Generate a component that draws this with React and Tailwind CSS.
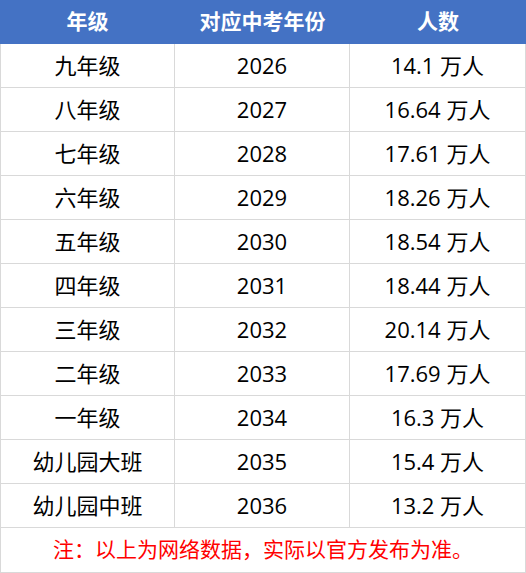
const rows = [
  ['九年级', '2026', '14.1 万人'],
  ['八年级', '2027', '16.64 万人'],
  ['七年级', '2028', '17.61 万人'],
  ['六年级', '2029', '18.26 万人'],
  ['五年级', '2030', '18.54 万人'],
  ['四年级', '2031', '18.44 万人'],
  ['三年级', '2032', '20.14 万人'],
  ['二年级', '2033', '17.69 万人'],
  ['一年级', '2034', '16.3 万人'],
  ['幼儿园大班', '2035', '15.4 万人'],
  ['幼儿园中班', '2036', '13.2 万人'],
];

const font = { fontFamily: '"Open Sans", "Noto Sans CJK SC", sans-serif' };

export default function App() {
  return (
    <div className="w-[526px] bg-white" style={font}>
      <div className="grid grid-cols-[175px_175px_176px] h-[44px] bg-[#4472c4] text-white font-bold text-[21px]">
        <div className="flex items-center justify-center">年级</div>
        <div className="flex items-center justify-center">对应中考年份</div>
        <div className="flex items-center justify-center">人数</div>
      </div>
      <div className="border-x border-[#d9d9d9]">
        {rows.map(([grade, year, count]) => (
          <div key={grade} className="grid grid-cols-[174px_175px_175px] h-[44px] border-b border-[#d9d9d9] text-[22px] text-black">
            <div className="flex items-center justify-center border-r border-[#d9d9d9]">{grade}</div>
            <div className="flex items-center justify-center border-r border-[#d9d9d9]">{year}</div>
            <div className="flex items-center justify-center">{count}</div>
          </div>
        ))}
        <div className="h-[45px] flex items-center justify-center border-b border-[#d9d9d9] text-[21px] text-[#ff0000]">
          注：以上为网络数据，实际以官方发布为准。
        </div>
      </div>
    </div>
  );
}
